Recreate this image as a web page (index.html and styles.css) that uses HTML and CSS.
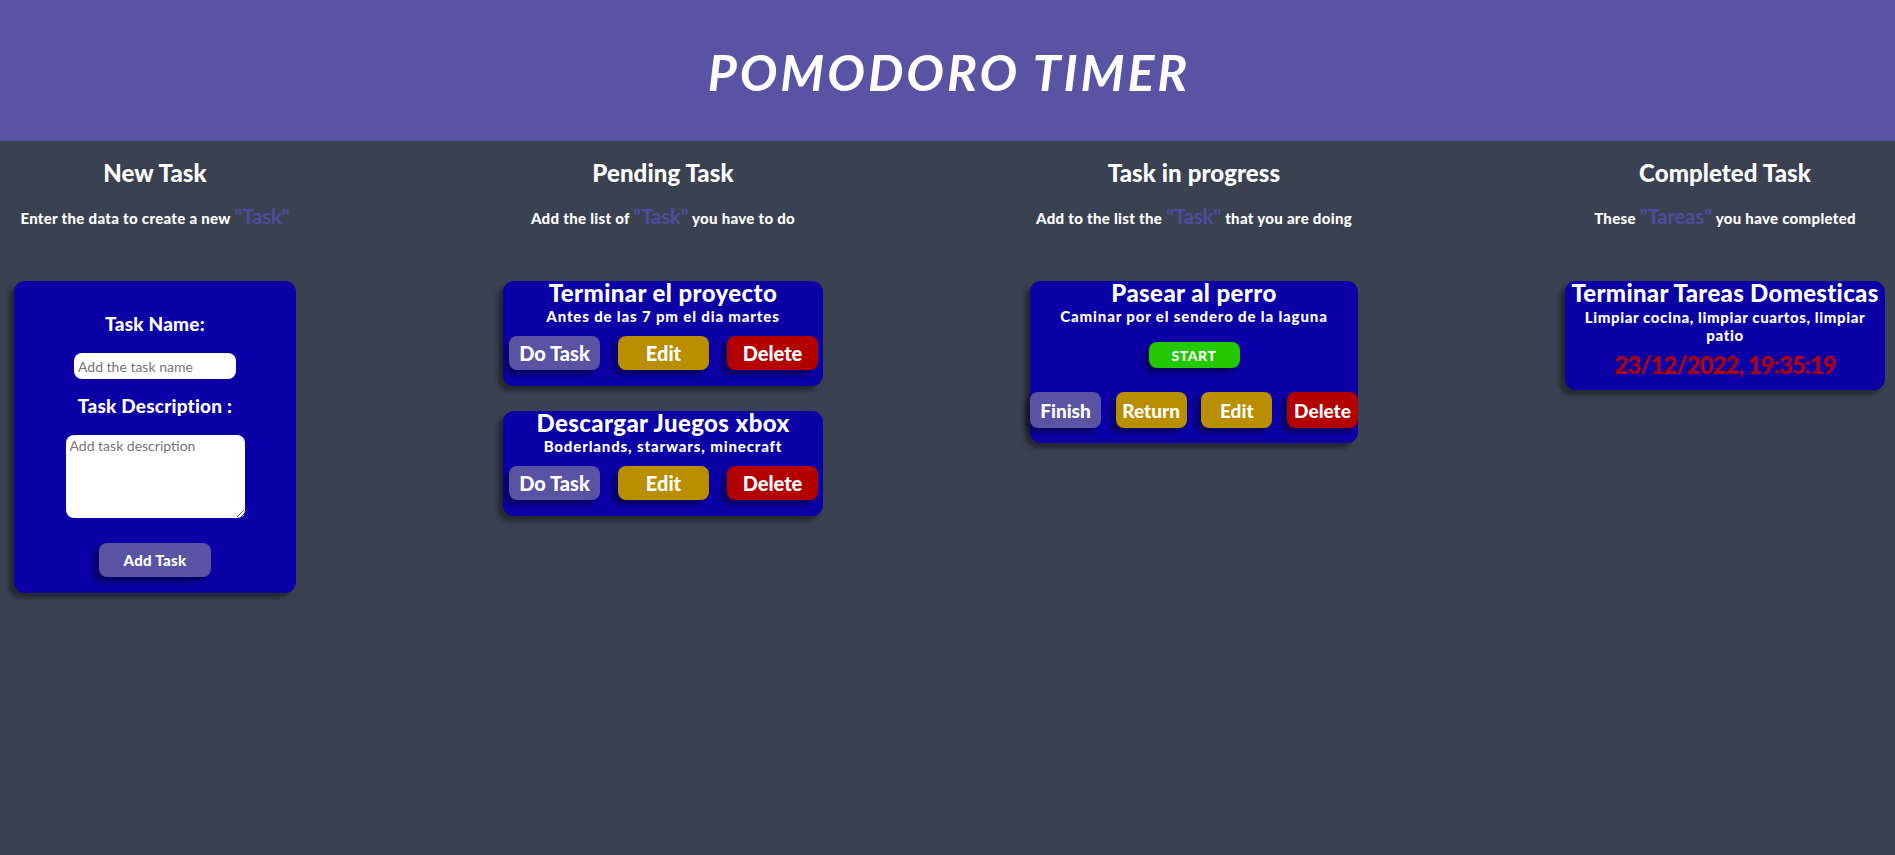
FILE: index.html
```html
<!DOCTYPE html>
<html lang="en">
<head>
<meta charset="utf-8">
<title>Pomodoro Timer</title>
<link rel="stylesheet" href="styles.css">
</head>
<body>
<header class="top-bar">
  <h1 class="app-title">POMODORO TIMER</h1>
</header>
<main class="board">
  <section class="column col-new">
    <div class="col-head">
      <h2 class="col-title">New Task</h2>
      <p class="col-sub">Enter the data to create a new <span class="accent">"Task"</span></p>
    </div>
    <form class="card form-card">
      <label class="form-label" for="taskName">Task Name:</label>
      <input class="form-input" id="taskName" type="text" placeholder="Add the task name">
      <label class="form-label label-desc" for="taskDesc">Task Description :</label>
      <textarea class="form-area" id="taskDesc" placeholder="Add task description"></textarea>
      <button class="btn btn-add" type="button">Add Task</button>
    </form>
  </section>

  <section class="column col-pending">
    <div class="col-head">
      <h2 class="col-title">Pending Task</h2>
      <p class="col-sub">Add the list of <span class="accent">"Task"</span> you have to do</p>
    </div>
    <div class="card task-card">
      <h3 class="task-title">Terminar el proyecto</h3>
      <p class="task-desc">Antes de las 7 pm el dia martes</p>
      <div class="btn-row row-pending">
        <button class="btn btn-do">Do Task</button>
        <button class="btn btn-edit">Edit</button>
        <button class="btn btn-delete">Delete</button>
      </div>
    </div>
    <div class="card task-card">
      <h3 class="task-title">Descargar Juegos xbox</h3>
      <p class="task-desc">Boderlands, starwars, minecraft</p>
      <div class="btn-row row-pending">
        <button class="btn btn-do">Do Task</button>
        <button class="btn btn-edit">Edit</button>
        <button class="btn btn-delete">Delete</button>
      </div>
    </div>
  </section>

  <section class="column col-progress">
    <div class="col-head">
      <h2 class="col-title">Task in progress</h2>
      <p class="col-sub">Add to the list the <span class="accent">"Task"</span> that you are doing</p>
    </div>
    <div class="card task-card progress-card">
      <h3 class="task-title">Pasear al perro</h3>
      <p class="task-desc">Caminar por el sendero de la laguna</p>
      <button class="btn btn-start">START</button>
      <div class="btn-row row-progress">
        <button class="btn btn-small btn-do">Finish</button>
        <button class="btn btn-small btn-edit">Return</button>
        <button class="btn btn-small btn-edit">Edit</button>
        <button class="btn btn-small btn-delete">Delete</button>
      </div>
    </div>
  </section>

  <section class="column col-done">
    <div class="col-head">
      <h2 class="col-title">Completed Task</h2>
      <p class="col-sub">These <span class="accent">"Tareas"</span> you have completed</p>
    </div>
    <div class="card task-card done-card">
      <h3 class="task-title title-wide">Terminar Tareas Domesticas</h3>
      <p class="task-desc desc-wrap">Limpiar cocina, limpiar cuartos, limpiar patio</p>
      <p class="task-date">23/12/2022, 19:35:19</p>
    </div>
  </section>
</main>
</body>
</html>
```

FILE: styles.css
```css
* {
  box-sizing: border-box;
}

html, body {
  margin: 0;
  padding: 0;
}

body {
  background: #3a4252;
  color: #ffffff;
  font-family: "Lato", "Open Sans", sans-serif;
  font-weight: 900;
  min-height: 855px;
}

.top-bar {
  height: 141px;
  background: #5953a4;
  display: flex;
  align-items: center;
  justify-content: center;
}

.app-title {
  margin: 0;
  font-size: 50px;
  font-style: italic;
  font-weight: 700;
  letter-spacing: 3px;
  line-height: 1;
  color: #ffffff;
  padding: 2px 0 0 3px;
}

.board {
  display: flex;
  justify-content: space-between;
  align-items: flex-start;
  padding: 17px 10px 0 14px;
}

.column {
  display: flex;
  flex-direction: column;
  align-items: center;
  text-align: center;
}

.col-new { width: 282px; }
.col-pending { width: 320px; }
.col-progress { width: 328px; }
.col-done { width: 320px; }

.col-head {
  height: 123px;
  width: 100%;
}

.col-title {
  margin: 0;
  font-size: 24px;
  line-height: 29px;
  font-weight: 900;
  letter-spacing: 0.1px;
}

.col-sub {
  margin: 16px 0 0;
  font-size: 15px;
  line-height: 26px;
  white-space: nowrap;
  letter-spacing: 0.3px;
}

.accent {
  color: #4f4c9f;
  font-size: 20px;
  font-weight: 700;
  letter-spacing: 0;
}

.card {
  width: 100%;
  background: #0b00a6;
  border-radius: 11px;
  box-shadow: -5px 5px 5px rgba(0, 0, 0, 0.4);
}

/* New task form */
.form-card {
  display: flex;
  flex-direction: column;
  align-items: center;
  padding: 32px 0 16px;
  height: 312px;
}

.form-label {
  font-size: 19px;
  line-height: 22px;
  letter-spacing: 0.2px;
}

.form-input {
  margin-top: 18px;
  width: 162px;
  height: 26px;
  border: none;
  border-radius: 8px;
  background: #ffffff;
  padding: 0 4px;
  font-family: "Lato", sans-serif;
  font-weight: 400;
  font-size: 14px;
  color: #222;
}

.label-desc {
  margin-top: 16px;
}

.form-area {
  margin-top: 18px;
  width: 179px;
  height: 83px;
  border: none;
  border-radius: 8px;
  background: #ffffff;
  padding: 2px 4px;
  font-family: "Lato", sans-serif;
  font-weight: 400;
  font-size: 14px;
  color: #222;
  resize: vertical;
}

.form-input::placeholder,
.form-area::placeholder {
  color: #767676;
}

.btn {
  border: none;
  color: #ffffff;
  font-family: "Lato", "Open Sans", sans-serif;
  font-weight: 900;
  border-radius: 8px;
  box-shadow: -5px 5px 5px rgba(0, 0, 20, 0.45);
  padding: 0;
  cursor: pointer;
}

.btn-add {
  margin-top: 25px;
  width: 112px;
  height: 34px;
  background: #5953a4;
  font-size: 15px;
  letter-spacing: 0.3px;
}

/* Task cards */
.task-card {
  margin-bottom: 25px;
  padding: 0 0 16px;
}

.task-title {
  margin: 0;
  font-size: 24px;
  line-height: 24px;
  font-weight: 900;
  white-space: nowrap;
  letter-spacing: 0.4px;
}

.task-desc {
  margin: 1px 0 0;
  font-size: 15px;
  line-height: 20px;
  letter-spacing: 0.85px;
}

.btn-row {
  display: flex;
  justify-content: space-between;
  margin-top: 10px;
}

.row-pending {
  padding: 0 5px 0 6px;
}

.row-pending .btn {
  width: 91px;
  height: 34px;
  font-size: 20px;
  letter-spacing: 0;
}

.btn-do { background: #5953a4; }
.btn-edit { background: #b98e00; }
.btn-delete { background: #b30000; }

.progress-card {
  display: flex;
  flex-direction: column;
  align-items: center;
  padding-bottom: 15px;
}

.btn-start {
  margin-top: 16px;
  width: 91px;
  height: 26px;
  background: #22c800;
  font-size: 14px;
  letter-spacing: 0.5px;
}

.row-progress {
  width: 100%;
  margin-top: 24px;
}

.btn-small {
  min-width: 71px;
  height: 36px;
  padding: 0 6px;
  font-size: 19px;
  letter-spacing: 0;
}

.done-card {
  padding-bottom: 11px;
}

.title-wide {
  letter-spacing: 0.3px;
}

.desc-wrap {
  line-height: 18px;
  margin-top: 3px;
  padding: 0 10px;
  letter-spacing: 0.6px;
}

.task-date {
  margin: 7px 0 0;
  color: #b0000a;
  font-size: 24px;
  line-height: 28px;
  letter-spacing: -1px;
}
```
